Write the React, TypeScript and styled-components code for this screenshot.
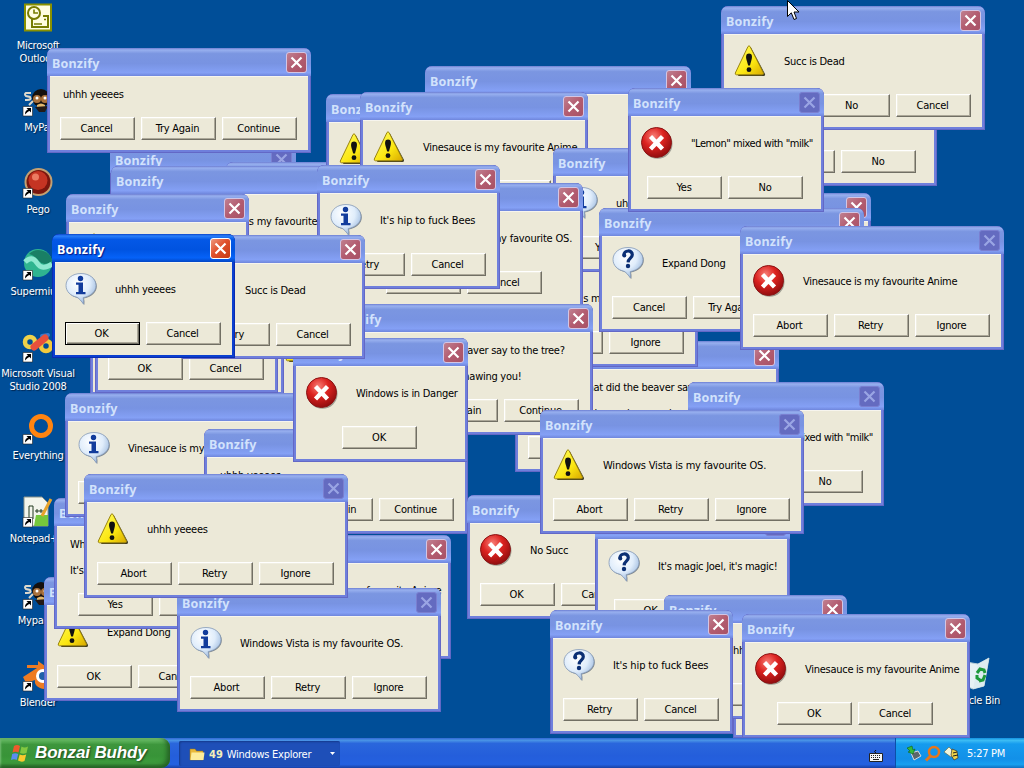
import React from "react";
import styled, { createGlobalStyle, css } from "styled-components";

type IconKind = "info" | "question" | "warning" | "error";

interface DialogData {
  x: number;
  y: number;
  w: number;
  text: string[];
  buttons: string[];
  icon?: IconKind;
  active?: boolean;
  noClose?: boolean;
  indent?: number;
}

const OS = ["Windows Vista is my favourite OS."];
const ANIME = ["Vinesauce is my favourite Anime"];
const SUCC = ["Succ is Dead"];
const YES = ["uhhh yeeees"];
const BEES = ["It's hip to fuck Bees"];
const MILK = ['"Lemon" mixed with "milk"'];
const DONG = ["Expand Dong"];
const MAGIC = ["It's magic Joel, it's magic!"];
const BEAVER = ["What did the beaver say to the tree?", "", "It's been nice gnawing you!"];

const ARI = ["Abort", "Retry", "Ignore"];
const CTC = ["Cancel", "Try Again", "Continue"];
const OC = ["OK", "Cancel"];
const RC = ["Retry", "Cancel"];
const YN = ["Yes", "No"];
const YNC = ["Yes", "No", "Cancel"];

// back to front
const dialogs: DialogData[] = [
  { x: 733, y: 614, w: 183, text: YES, buttons: OC, icon: "info" },
  { x: 272, y: 292, w: 237, text: OS, buttons: ["OK"], icon: "warning" },
  { x: 90, y: 271, w: 194, text: MAGIC, buttons: OC, icon: "info" },
  { x: 95, y: 269, w: 183, text: DONG, buttons: OC, icon: "info" },
  { x: 110, y: 145, w: 186, text: YES, buttons: OC, icon: "info", noClose: true },
  { x: 226, y: 162, w: 183, text: DONG, buttons: RC, icon: "info" },
  { x: 111, y: 166, w: 264, text: OS, buttons: ARI, icon: "info", noClose: true },
  { x: 66, y: 194, w: 183, text: YES, buttons: RC, icon: "warning" },
  { x: 44, y: 577, w: 183, text: DONG, buttons: OC, icon: "warning" },
  { x: 54, y: 498, w: 206, text: BEAVER, buttons: YN },
  { x: 65, y: 393, w: 264, text: ANIME, buttons: ARI, icon: "info" },
  { x: 224, y: 535, w: 227, text: ANIME, buttons: RC, icon: "question" },
  { x: 204, y: 429, w: 264, text: YES, buttons: CTC },
  { x: 326, y: 94, w: 183, text: YES, buttons: OC, icon: "warning" },
  { x: 425, y: 66, w: 266, text: YES, buttons: CTC, icon: "info" },
  { x: 360, y: 92, w: 228, text: ANIME, buttons: OC, icon: "warning" },
  { x: 741, y: 62, w: 196, text: MILK, buttons: YN, icon: "question" },
  { x: 721, y: 6, w: 264, text: SUCC, buttons: YNC, icon: "warning" },
  { x: 687, y: 193, w: 184, text: DONG, buttons: OC, icon: "info" },
  { x: 515, y: 341, w: 264, text: BEAVER, buttons: CTC, icon: "info" },
  { x: 434, y: 243, w: 264, text: MAGIC, buttons: ARI, icon: "info", indent: 70 },
  { x: 553, y: 148, w: 183, text: YES, buttons: YN, icon: "info" },
  { x: 346, y: 183, w: 237, text: OS, buttons: RC, icon: "warning" },
  { x: 329, y: 304, w: 264, text: BEAVER, buttons: CTC, icon: "error" },
  { x: 599, y: 208, w: 265, text: DONG, buttons: CTC, icon: "question" },
  { x: 628, y: 88, w: 196, text: MILK, buttons: YN, icon: "error", noClose: true },
  { x: 740, y: 226, w: 264, text: ANIME, buttons: ARI, icon: "error", noClose: true },
  { x: 688, y: 382, w: 196, text: MILK, buttons: YN, icon: "question", noClose: true },
  { x: 467, y: 495, w: 183, text: ["No Succ"], buttons: OC, icon: "error" },
  { x: 595, y: 511, w: 195, text: MAGIC, buttons: OC, icon: "question", noClose: true },
  { x: 540, y: 410, w: 264, text: OS, buttons: ARI, icon: "warning", noClose: true },
  { x: 664, y: 595, w: 183, text: YES, buttons: RC, icon: "info" },
  { x: 550, y: 610, w: 183, text: BEES, buttons: RC, icon: "question" },
  { x: 742, y: 614, w: 228, text: ANIME, buttons: OC, icon: "error" },
  { x: 177, y: 588, w: 264, text: OS, buttons: ARI, icon: "info", noClose: true },
  { x: 84, y: 474, w: 264, text: YES, buttons: ARI, icon: "warning", noClose: true },
  { x: 317, y: 165, w: 183, text: BEES, buttons: RC, icon: "info" },
  { x: 293, y: 338, w: 175, text: ["Windows is in Danger"], buttons: ["OK"], icon: "error" },
  { x: 182, y: 235, w: 183, text: SUCC, buttons: RC, icon: "question" },
  { x: 47, y: 48, w: 264, text: YES, buttons: CTC },
  { x: 52, y: 234, w: 183, text: YES, buttons: OC, icon: "info", active: true },
];

const GlobalStyle = createGlobalStyle`
  * { box-sizing: border-box; }
  body {
    margin: 0;
    overflow: hidden;
    font-family: "DejaVu Sans Condensed", "DejaVu Sans", sans-serif;
    font-stretch: condensed;
    font-size: 11px;
    letter-spacing: -0.25px;
    cursor: default;
  }
`;

const Screen = styled.div`
  position: relative;
  width: 1024px;
  height: 768px;
  display: flex;
  flex-direction: column;
  justify-content: space-between;
  overflow: hidden;
  background: #004e98;
`;

const Shortcuts = styled.div`
  display: flex;
  flex-direction: column;
  width: 76px;
  height: 738px;
  padding-top: 2px;
`;

const Shortcut = styled.div`
  display: flex;
  flex-direction: column;
  align-items: center;
  flex: 0 0 82.1px;
  gap: 3px;

  svg {
    flex: none;
  }
`;

const BinSpot = styled(Shortcut)`
  position: absolute;
  left: 935px;
  top: 656px;
  width: 76px;
`;

const Label = styled.div`
  color: #fff;
  line-height: 13px;
  text-align: center;
  white-space: pre;
  text-shadow: 1px 1px 1px #00234a;
`;

const Frame = styled.section<{ $active?: boolean }>`
  position: absolute;
  display: flex;
  flex-direction: column;
  padding: 0 3px 3px;
  border-radius: 7px 7px 0 0;
  background: ${(p) => (p.$active ? "#0a3fd0" : "#6f7fdc")};
  box-shadow: inset 0 0 0 1px ${(p) => (p.$active ? "#0a2bb0" : "#6368c6")};
  overflow: hidden;
`;

const TitleBar = styled.header<{ $active?: boolean }>`
  display: flex;
  align-items: center;
  justify-content: space-between;
  flex: 0 0 28px;
  margin: 0 -3px;
  padding: 1px 4px 0 5px;
  border-radius: 7px 7px 0 0;
  color: ${(p) => (p.$active ? "#fff" : "#d2e2fc")};
  font: bold 12.5px "Noto Sans", sans-serif;
  letter-spacing: 0.2px;
  ${(p) =>
    p.$active
      ? css`
          background: linear-gradient(#0a44c8 0, #2a80fa 7%, #0458e6 20%, #0053e0 55%, #0562f8 85%, #0346c4 100%);
          text-shadow: 1px 1px 1px #0a1883;
        `
      : css`
          background: linear-gradient(#6c7ed2 0, #98b0ef 7%, #7b96e1 20%, #7893e2 55%, #84a0f5 88%, #6f86dc 100%);
        `}
`;

const Caption = styled.span`
  padding-top: 2px;
`;

const CloseBox = styled.span<{ $state: "active" | "idle" | "disabled" }>`
  display: flex;
  align-items: center;
  justify-content: center;
  width: 21px;
  height: 21px;
  border: 1px solid ${(p) => (p.$state === "disabled" ? "#7a7fd0" : p.$state === "active" ? "#fff" : "#d3c5e4")};
  border-radius: 3px;
  color: ${(p) => (p.$state === "disabled" ? "#9aa5e4" : "#fff")};
  background: ${(p) =>
    p.$state === "active"
      ? "linear-gradient(135deg, #ee9a80, #e0512d 45%, #c63a14)"
      : p.$state === "disabled"
        ? "#646bc0"
        : "linear-gradient(135deg, #c08090, #b35c70 50%, #a85266)"};
`;

const Body = styled.div`
  display: flex;
  flex-direction: column;
  flex: 1;
  padding-bottom: 11px;
  overflow: hidden;
  background: #ece9d8;
  box-shadow: inset 0 1px #f7f5ee;
`;

const MessageRow = styled.div<{ $height: number }>`
  display: flex;
  flex: 0 0 ${(p) => p.$height}px;
  padding: 10px 0 0 10px;

  > svg {
    flex: none;
    margin-top: 1px;
  }
`;

const Message = styled.div<{ $left: number; $top: number; $tracking: number }>`
  margin: ${(p) => p.$top}px 0 0 ${(p) => p.$left}px;
  color: #000;
  line-height: 13px;
  letter-spacing: ${(p) => p.$tracking}px;
  white-space: nowrap;

  p {
    height: 13px;
    margin: 0;
  }
`;

const ButtonRow = styled.div`
  display: flex;
  justify-content: center;
  gap: 6px;
  padding-right: 2px;
`;

const PushButton = styled.button<{ $primary?: boolean }>`
  flex: none;
  width: 75px;
  height: 23px;
  padding: 0 1px 0 0;
  border: 1px solid;
  border-color: #fff #716f64 #716f64 #fff;
  background: #ece9d8;
  box-shadow: inset -1px -1px #aca899, inset 1px 1px #f1efe2;
  color: #000;
  font: inherit;
  font-stretch: inherit;
  letter-spacing: inherit;
  ${(p) =>
    p.$primary &&
    css`
      border-color: #000;
      box-shadow: inset 1px 1px #fff, inset -1px -1px #716f64, inset -2px -2px #aca899;
    `}
`;

const TaskBar = styled.footer`
  display: flex;
  height: 30px;
  align-items: stretch;
  background: linear-gradient(#3168d5 0, #4993e6 8%, #2a66dc 18%, #245edb 60%, #2461e0 88%, #1941a5 100%);
`;

const StartButton = styled.div`
  display: flex;
  align-items: center;
  gap: 5px;
  width: 170px;
  padding: 0 0 1px 11px;
  border-radius: 0 9px 9px 0;
  background: linear-gradient(#5fa85c 0, #63b860 7%, #3d963c 22%, #389438 60%, #3f9e3e 85%, #2a6f2b 100%);
  box-shadow: inset -3px -2px 5px #246024, inset 1px 1px 2px #7cc67a;
  color: #fff;
  font: italic bold 17px "Liberation Sans", sans-serif;
  letter-spacing: -0.15px;
  text-shadow: 1px 1px 2px #1d401d;
`;

const TaskButton = styled.div`
  display: flex;
  align-items: center;
  gap: 4px;
  width: 161px;
  margin: 3px 0 2px 9px;
  padding: 1px 4px 0 10px;
  border-radius: 2px;
  background: #1e4fb8;
  box-shadow: inset 1px 1px 2px #153a8c;
  color: #fff;

  b {
    color: #f4f0b8;
    letter-spacing: 0;
  }
  svg:last-child {
    margin-left: auto;
  }
`;

const Spacer = styled.div`
  display: flex;
  flex: 1;
  align-items: center;
  justify-content: flex-end;
  padding: 5px 12px 0 0;
`;

const Tray = styled.div`
  display: flex;
  align-items: center;
  gap: 2px;
  width: 129px;
  padding-left: 10px;
  border-left: 1px solid #0c4fa8;
  background: linear-gradient(#1290e0 0, #3cbcf4 8%, #159bee 20%, #1290e8 70%, #18a0f0 88%, #1070c0 100%);
  color: #fff;

  span {
    margin-left: 5px;
  }
`;

const Pointer = styled.svg`
  position: absolute;
  left: 787px;
  top: 0;
`;

const BALLOON = "M16 .5C7.500.5 1 5.500 1 12.500c0 6 4.500 10.300 11 11.800 2 1 4.500 3.800 6.500 6.900.3-2.200.2-4.800-.3-6.500C26 23 31 18.500 31 12.500 31 5.500 24.500.5 16 .5z";

const StatusIcon: React.FC<{ kind: IconKind }> = ({ kind }) => (
  <svg width="32" height="32" viewBox="0 0 32 32">
    <defs>
      <radialGradient id="redBall" cx="0.4" cy="0.3" r="0.75">
        <stop offset="0" stopColor="#f88078" />
        <stop offset="0.45" stopColor="#dc2320" />
        <stop offset="1" stopColor="#8a0a0c" />
      </radialGradient>
      <radialGradient id="bubble" cx="0.4" cy="0.3" r="0.8">
        <stop offset="0" stopColor="#fff" />
        <stop offset="0.5" stopColor="#e0edfb" />
        <stop offset="1" stopColor="#86a8d4" />
      </radialGradient>
      <linearGradient id="sign" x1="0" x2="1" y1="0" y2="1">
        <stop offset="0" stopColor="#ffff66" />
        <stop offset="0.6" stopColor="#fbe611" />
        <stop offset="1" stopColor="#d8a800" />
      </linearGradient>
    </defs>
    {kind === "error" && (
      <>
        <circle cx="16.500" cy="16.800" r="15" fill="#6d6a62" opacity="0.6" />
        <circle cx="15.500" cy="15.500" r="15" fill="url(#redBall)" stroke="#8c1515" />
        <path d="M9.500 9.500l12 12.500M21.500 9.500L9.500 22" stroke="#fff" strokeWidth="4.400" />
      </>
    )}
    {kind === "warning" && (
      <>
        <path d="M17 2.500L31 29q.4 2-1.500 2H4z" fill="#3c3820" />
        <path d="M14 1.500q1-1.500 2 0l13.500 26.500q.3 1.700-1.500 1.800H2.500Q.8 29.500 1.300 28z" fill="url(#sign)" stroke="#9a8410" />
        <path d="M15 8.500c3.200 0 3.200 3 2.700 5.500L16 20.500h-1.800L12.300 14c-.5-2.500-.4-5.500 2.700-5.500z" fill="#111" />
        <circle cx="15" cy="24.700" r="2.400" fill="#111" />
      </>
    )}
    {(kind === "info" || kind === "question") && (
      <>
        <path d={BALLOON} fill="#55606e" opacity="0.7" transform="translate(.8 .8)" />
        <path d={BALLOON} fill="url(#bubble)" stroke="#8499b8" strokeWidth="0.800" />
      </>
    )}
    {kind === "info" && (
      <>
        <circle cx="15.500" cy="5.500" r="2.700" fill="#123c9c" />
        <path d="M11 9.500h7v9.500h2.500v2.200H11V19h2.500v-7.300H11z" fill="#123c9c" />
      </>
    )}
    {kind === "question" && (
      <>
        <path d="M11.800 8.500c0-6 8.500-5.800 8.500-.8 0 3.500-4 3.400-4.200 7.600" fill="none" stroke="#0b2f74" strokeWidth="3.200" />
        <circle cx="12.300" cy="8.500" r="2" fill="#0b2f74" />
        <circle cx="16" cy="19" r="2.200" fill="#0b2f74" />
      </>
    )}
  </svg>
);

const Cross: React.FC = () => (
  <svg width="13" height="13" viewBox="0 0 13 13">
    <path d="M1.500 1.500l10 10M11.500 1.500l-10 10" stroke="currentColor" strokeWidth="2.200" />
  </svg>
);

const tracking = (text: string[]) => {
  if (text === OS) return -0.19;
  if (text === MILK) return -0.45;
  if (text === BEES) return -0.1;
  return -0.27;
};

const Dialog: React.FC<DialogData> = (props) => {
  const { x, y, w, text, buttons, icon, active, noClose, indent = 63 } = props;
  const tall = text.length > 1;
  const buttonTop = tall ? 95 : icon ? 88 : 69;
  const state = noClose ? "disabled" : active ? "active" : "idle";

  return (
    <Frame $active={active} style={{ left: x, top: y, width: w, height: buttonTop + 36 }}>
      <TitleBar $active={active}>
        <Caption>Bonzify</Caption>
        <CloseBox $state={state}>
          <Cross />
        </CloseBox>
      </TitleBar>
      <Body>
        <MessageRow $height={buttonTop - 28}>
          {icon && <StatusIcon kind={icon} />}
          <Message $left={icon ? indent - 45 : 3} $top={icon && !tall ? 11 : 2} $tracking={tracking(text)}>
            {text.map((line, i) => (
              <p key={i}>{line}</p>
            ))}
          </Message>
        </MessageRow>
        <ButtonRow>
          {buttons.map((name, i) => (
            <PushButton key={name} $primary={active && i === 0}>
              {name}
            </PushButton>
          ))}
        </ButtonRow>
      </Body>
    </Frame>
  );
};

const Arrow: React.FC = () => (
  <g>
    <path d="M0 22.500h9.500V32H0z" fill="#fff" stroke="#222" strokeWidth="0.600" />
    <path d="M2 30.500c0-3 1-4 3-5L3.500 24H8v4.500L6.600 27c-2 .6-2.600 1.500-4.600 3.500z" fill="#000" />
  </g>
);

const Monkey: React.FC = () => (
  <>
    <circle cx="18" cy="14" r="9" fill="#15100e" />
    <circle cx="14" cy="15" r="4" fill="#a9713c" />
    <circle cx="22" cy="15" r="4" fill="#a9713c" />
    <circle cx="14" cy="14" r="1.500" fill="#fff" />
    <circle cx="22" cy="14" r="1.500" fill="#fff" />
    <path d="M14 21q4-3 8 0v4h-8z" fill="#e3b86f" />
    <path d="M8 9H3q-2 1 0 3l4 1q2 3-3 3H2M10 17l-4 4" fill="none" stroke="#dcd8cc" strokeWidth="2" />
    <path d="M12 23l4 5h6l3-6" fill="#241a16" />
  </>
);

const shortcuts = [
  {
    label: "Microsoft\nOutlook",
    art: (
      <>
        <path d="M1 1.500h28v28H1z" fill="#8a9100" />
        <path d="M3 3.500h24v24H3z" fill="#fffde0" />
        <path d="M9 16v9h16V14h-5" fill="none" stroke="#777c00" strokeWidth="2" />
        <circle cx="11" cy="11" r="6" fill="#fffde0" stroke="#777c00" strokeWidth="2" />
        <path d="M11 7.500V11h4M11 22h8M21 17.500h2" fill="none" stroke="#777c00" strokeWidth="1.600" />
      </>
    ),
  },
  { label: "MyPal", art: <><Monkey /><Arrow /></> },
  {
    label: "Pego",
    art: (
      <>
        <circle cx="15.500" cy="16" r="14" fill="#c3a072" />
        <circle cx="15.500" cy="16" r="12" fill="#7a160e" />
        <circle cx="15" cy="14.500" r="9.500" fill="#c53423" />
        <circle cx="12.500" cy="11" r="3.500" fill="#ec7c62" />
        <Arrow />
      </>
    ),
  },
  {
    label: "Supermium",
    art: (
      <>
        <circle cx="15" cy="15" r="14" fill="#2fb490" />
        <path d="M6 6Q13-1 23 4q6 4 6 9-8 6-13 0T6 6z" fill="#197f65" />
        <path d="M2 14q7-7 12 1t15 1" fill="none" stroke="#8fe8d0" strokeWidth="5" />
        <Arrow />
      </>
    ),
  },
  {
    label: "Microsoft Visual\nStudio 2008",
    art: (
      <>
        <circle cx="7" cy="12" r="5" fill="none" stroke="#efd24a" strokeWidth="4.500" />
        <circle cx="23" cy="16" r="5" fill="none" stroke="#f3ca3c" strokeWidth="4.500" />
        <path d="M19 6l6-1" stroke="#3c78c8" strokeWidth="4" strokeLinecap="round" />
        <path d="M11 17L22 8" stroke="#e8503c" strokeWidth="7" strokeLinecap="round" />
        <Arrow />
      </>
    ),
  },
  {
    label: "Everything",
    art: (
      <>
        <circle cx="18" cy="14" r="9.500" fill="none" stroke="#ff8410" strokeWidth="5" />
        <Arrow />
      </>
    ),
  },
  {
    label: "Notepad++",
    art: (
      <>
        <path d="M1 2h18l6 6v23H1z" fill="#f3f5ec" stroke="#8a938a" />
        <path d="M13 20h12v11H11z" fill="#76c83c" />
        <path d="M6 11v13M6 11h4v13M12 16h9M14 14v4M18 14v4" stroke="#233a20" fill="none" />
        <path d="M28 4L19 21" stroke="#e7a32a" strokeWidth="3" />
        <Arrow />
      </>
    ),
  },
  { label: "Mypal68", art: <><Monkey /><Arrow /></> },
  {
    label: "Blender",
    art: (
      <>
        <path d="M0 18L14 9H4V6h11V2l14 10q3 6 1 13-6 7-13 4-6-3-5-8l-9 3z" fill="#ee7b22" />
        <circle cx="20" cy="17" r="7" fill="#fff" />
        <circle cx="20" cy="17" r="4" fill="#1f60a8" />
        <Arrow />
      </>
    ),
  },
];

const App: React.FC = () => (
  <>
    <GlobalStyle />
    <Screen>
      <Shortcuts>
        {shortcuts.map((s) => (
          <Shortcut key={s.label}>
            <svg width="32" height="34" viewBox="-1 0 32 34">
              {s.art}
            </svg>
            <Label>{s.label}</Label>
          </Shortcut>
        ))}
      </Shortcuts>
      <BinSpot>
        <svg width="34" height="35" viewBox="0 0 34 35">
          <path d="M4 5l18 3 11-6-5 28-11 3-9-4z" fill="#e6f1f4" stroke="#b9cfd8" />
          <path d="M22 8l-5 25 11-3 5-28z" fill="#dcebf0" />
          <path d="M21 17l3-4 4 1 1 3M29 19l-2 5-4 1M24 24l-3-2v-3" fill="none" stroke="#1e9a3a" strokeWidth="3" />
        </svg>
        <Label>Recycle Bin</Label>
      </BinSpot>
      {dialogs.map((d) => (
        <Dialog key={`${d.x}-${d.y}`} {...d} />
      ))}
      <TaskBar>
        <StartButton>
          <svg width="19" height="18" viewBox="0 0 19 18">
            <path d="M3 2q3-2 6 0L7.500 8.500Q4.500 7 1.500 8.500z" fill="#ee5a2c" />
            <path d="M10.500 2.500q3 2 6.500 0L15.500 9q-3 1.500-6.500 0z" fill="#82c841" />
            <path d="M1.200 10q3-1.500 6 0l-1.500 6Q3 14.500 0 16z" fill="#5a8df0" />
            <path d="M8.700 10.500q3 1.500 6.500 0L13.500 17q-3 1.500-6.500-.5z" fill="#fbc92e" />
          </svg>
          Bonzai Buhdy
        </StartButton>
        <TaskButton>
          <svg width="16" height="14" viewBox="0 0 16 14">
            <path d="M1 2h5l1.500 2H14v9H1z" fill="#e9b93a" stroke="#9a7314" strokeWidth="0.500" />
            <path d="M2.500 5.500H15.500L14.500 13H1.500z" fill="#fdec9a" />
          </svg>
          <b>49</b> Windows Explorer
          <svg width="7" height="4" viewBox="0 0 7 4">
            <path d="M1 0h5L3.500 3z" fill="#fff" />
          </svg>
        </TaskButton>
        <Spacer>
          <svg width="14" height="13" viewBox="0 0 14 13">
            <path d="M7 4q-3-1 0-3" fill="none" stroke="#111" />
            <path d="M.5 4.500h13v8H.5z" fill="#f5f5f5" stroke="#222" />
            <path d="M2 6.500h10M2 8.500h10" stroke="#222" strokeDasharray="1 1" />
            <path d="M4 10.500h6" stroke="#222" />
          </svg>
        </Spacer>
        <Tray>
          <svg width="16" height="16" viewBox="0 0 16 16">
            <path d="M5 8l7-2 3 5-7 4z" fill="#5d666c" stroke="#d5dade" />
            <path d="M1 3l5-2 1 4 2-1-2 5-5-2 2-1z" fill="#35b83a" stroke="#106018" strokeWidth="0.600" />
          </svg>
          <svg width="17" height="17" viewBox="0 0 17 17">
            <circle cx="10" cy="7" r="5" fill="none" stroke="#e8761a" strokeWidth="2.500" />
            <path d="M7 10.500l-5 5" stroke="#e8761a" strokeWidth="3" />
          </svg>
          <svg width="17" height="16" viewBox="0 0 17 16">
            <path d="M1 7l5-5 3 3 2 5-3 2z" fill="#f2f5dc" stroke="#5d6440" strokeWidth="0.600" />
            <path d="M9 4l5 2 1 7-4 2-3-5z" fill="#ecd24b" stroke="#333" strokeWidth="0.700" />
            <path d="M10 8l4-1M10 11l5-1" stroke="#222" />
          </svg>
          <span>5:27 PM</span>
        </Tray>
      </TaskBar>
      <Pointer width="13" height="21" viewBox="0 0 13 21">
        <path d="M.5.500v16l3.800-3.700L7 19.500l2.500-1L7 12h5z" fill="#fff" stroke="#000" />
      </Pointer>
    </Screen>
  </>
);

export default App;
